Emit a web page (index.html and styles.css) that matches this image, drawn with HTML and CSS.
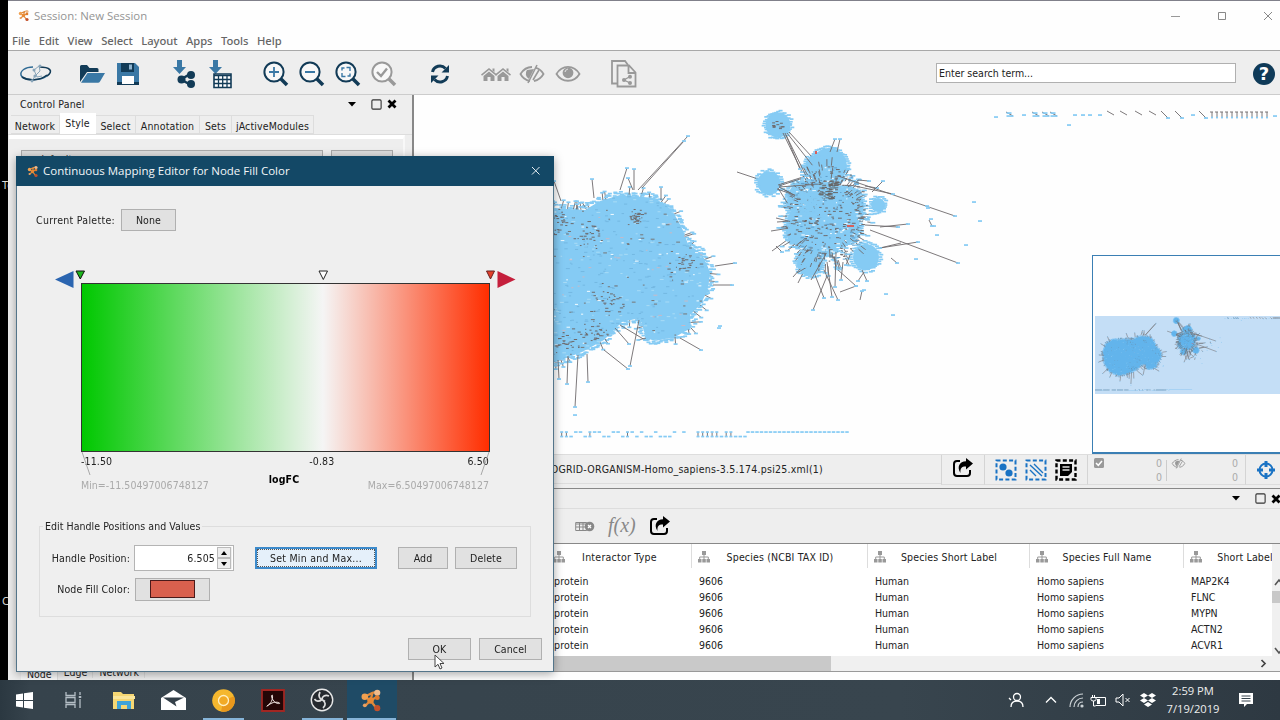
FILE: index.html
```html
<!DOCTYPE html>
<html lang="en">
<head>
    <meta charset="UTF-8">
    <title>Session: New Session</title>
    <link rel="stylesheet" href="styles.css">
</head>
<body>

<!-- shared icons -->
<svg class="defs" width="0" height="0">
    <symbol id="logo" viewBox="0 0 24 24">
        <path d="M5 8l8-4 5-1M13 4l-2 8 6 8M5 8l6 4 7-4M11 12l-6 6" fill="none" stroke="#e08a3c" stroke-width="2.4"/>
        <circle cx="5" cy="8" r="3.4" fill="#f0a050"/><circle cx="18" cy="4" r="3.2" fill="#efbb8b"/>
        <circle cx="11" cy="12" r="3.4" fill="#e98a35"/><circle cx="18" cy="9" r="2.6" fill="#e07b2c"/>
        <circle cx="18" cy="20" r="3.2" fill="#c4512b"/><circle cx="5" cy="17" r="2" fill="#e9a060"/>
    </symbol>
    <symbol id="lens" viewBox="0 0 26 26">
        <circle cx="11" cy="11" r="9.6" fill="#fff" fill-opacity=".6" stroke="currentColor" stroke-width="2"/>
        <path d="M18 18l6 6" stroke="currentColor" stroke-width="3.6"/>
    </symbol>
    <symbol id="share" viewBox="0 0 22 20">
        <path d="M8 3H5a3 3 0 0 0-3 3v9a3 3 0 0 0 3 3h10a3 3 0 0 0 3-3v-3" fill="none" stroke="#000" stroke-width="2"/>
        <path d="M14 0l7 5.500-7 6V8.500C10 8.300 8 10 8.500 15 4.500 9 7.500 3.500 14 3.300z" fill="#000"/>
    </symbol>
    <symbol id="tree" viewBox="0 0 12 12">
        <path d="M4 0h4v4H4zM0 8h3.500v3.500H0zM4.300 8h3.500v3.500H4.300zM8.500 8H12v3.500H8.500z" fill="#999"/>
        <path d="M6 4v4M1.700 8V6h8.600v2" fill="none" stroke="#999"/>
    </symbol>
    <symbol id="eye-off" viewBox="0 0 26 20">
        <path d="M11 17C6 16 3 13 1.500 10 4 6 8 3 13 3M17 3.800c4 1.200 6 3.500 7.500 6.200-2 3.500-5 6-9.500 7" fill="none" stroke="currentColor" stroke-width="1.8"/>
        <path d="M8 6l7-1-5 10a6 6 0 0 1-2-9z" fill="currentColor"/>
        <path d="M18 1L9 19M20 6l-6 10" stroke="currentColor" stroke-width="1.600"/>
    </symbol>
    <symbol id="float" viewBox="0 0 10 10"><rect x=".8" y=".8" width="8.400" height="8.400" rx="1" fill="none" stroke="#333"/></symbol>
    <symbol id="close" viewBox="0 0 10 10"><path d="M1.500 1.500l7 7M8.500 1.500l-7 7" stroke="#000" stroke-width="2.800"/></symbol>
</svg>

<div class="desktop">
    <div class="desktop-edge">
        <span class="edge-label">To</span>
        <span class="edge-label">Cy</span>
    </div>

    <div class="app">
        <div class="titlebar">
            <svg class="title-logo" width="12" height="13"><use href="#logo"/></svg>
            <span class="title-text">Session: New Session</span>
            <div class="window-buttons">
                <svg width="10" height="10"><path d="M0 5.500h9" stroke="#999"/></svg>
                <svg width="10" height="10"><path d="M1.500 1.500h7v7h-7z" fill="none" stroke="#888"/></svg>
                <svg width="10" height="10"><path d="M1 1l8 8M9 1L1 9" stroke="#888"/></svg>
            </div>
        </div>
        <div class="menubar">
            <span>File</span><span>Edit</span><span>View</span><span>Select</span><span>Layout</span><span>Apps</span><span>Tools</span><span>Help</span>
        </div>

        <div class="toolbar">
            <div class="tools">
                <div class="tool-group">
                    <span class="tool"><svg width="34" height="22" viewBox="0 0 34 22" fill="none">
                        <path d="M14 4C6 4 1 8 2 12c1 5 17 7 26 1" stroke="#2f6a94" stroke-width="1.500"/>
                        <path d="M28 13c7-5 3-9-8-9M3 14c6 4 18 4 25-2" stroke="#123b57" stroke-width="1.600"/>
                        <path d="M15 7l5-4 1 5-5 5-3 5M15 7l3 7 5-1" stroke="#8aa6ba"/>
                        <circle cx="15" cy="7" r="1.500" fill="#8aa6ba"/><circle cx="21" cy="3" r="1.500" fill="#8aa6ba"/><circle cx="16" cy="13" r="1.600" fill="#8aa6ba"/><circle cx="13" cy="18" r="1.400" fill="#8aa6ba"/>
                    </svg></span>
                </div>
                <div class="tool-group">
                    <span class="tool"><svg width="26" height="20" viewBox="0 0 26 20">
                        <path d="M1 18V2.500Q1 1 2.500 1H8l2.500 3H18q1.500 0 1.500 1.500V8H8z" fill="#123b57"/>
                        <path d="M8.500 9H26l-5 8.500q-.7 1.200-2 1.200H2z" fill="#3a78a5"/>
                    </svg></span>
                    <span class="tool"><svg width="24" height="24" viewBox="0 0 24 24">
                        <path d="M1 1h18l4 4v18H1z" fill="#3a78a5"/><path d="M5 1h13v9H5z" fill="#123b57"/>
                        <path d="M13 2.500h3v5h-3z" fill="#8fb4cf"/><path d="M1 20h22v3H1z" fill="#123b57"/><path d="M6 14h12v8H6z" fill="#fff"/>
                    </svg></span>
                </div>
                <div class="tool-group">
                    <span class="tool"><svg width="24" height="30" viewBox="0 0 24 30">
                        <path d="M5 1h5v7h4l-6.500 7L1 8h4z" fill="#3a78a5"/>
                        <path d="M18 15L9 20.500l9 5" stroke="#123b57" stroke-width="2.500" fill="none"/>
                        <circle cx="9.500" cy="20.500" r="4" fill="#123b57"/><circle cx="19" cy="16" r="4" fill="#123b57"/><circle cx="19" cy="25" r="4" fill="#123b57"/>
                    </svg></span>
                    <span class="tool"><svg width="24" height="30" viewBox="0 0 24 30">
                        <path d="M5 1h5v7h4l-6.500 7L1 8h4z" fill="#3a78a5"/>
                        <path d="M6 15h17v13.500H6z" fill="#fff" stroke="#123b57" stroke-width="1.600"/>
                        <path d="M6 16.500h17M6 20.500h17M6 24.500h17M10.500 16v12M14.700 16v12M19 16v12" stroke="#123b57" stroke-width="1.300"/>
                    </svg></span>
                </div>
                <div class="tool-group">
                    <span class="tool"><svg class="navy" width="26" height="26" viewBox="0 0 26 26"><use href="#lens"/><path d="M11 6v10M6 11h10" stroke="#3a78a5" stroke-width="1.800"/></svg></span>
                    <span class="tool"><svg class="navy" width="26" height="26" viewBox="0 0 26 26"><use href="#lens"/><path d="M6 11h10" stroke="#3a78a5" stroke-width="2"/></svg></span>
                    <span class="tool"><svg class="navy" width="26" height="26" viewBox="0 0 26 26"><use href="#lens"/><path d="M11.500 6.500H15V10M10.500 15.500H7V12M7 9.500V7h2.500M15 12.500V15h-2.500" fill="none" stroke="#3a78a5" stroke-width="1.400"/></svg></span>
                    <span class="tool"><svg class="grey" width="26" height="26" viewBox="0 0 26 26"><use href="#lens"/><path d="M6 11l4 4 6-7.500" fill="none" stroke="#999" stroke-width="2.400"/></svg></span>
                </div>
                <div class="tool-group">
                    <span class="tool"><svg width="20" height="20" viewBox="0 0 20 20">
                        <path d="M2.500 8a7.600 7.600 0 0 1 13-3.500M17.500 12a7.600 7.600 0 0 1-13 3.500" fill="none" stroke="#123b57" stroke-width="3"/>
                        <path d="M19 1v7.500h-7.500zM1 19v-7.500h7.500z" fill="#123b57"/>
                    </svg></span>
                </div>
                <div class="tool-group">
                    <span class="tool"><svg width="32" height="16" viewBox="0 0 32 16" fill="#999">
                        <path d="M1 8.500L9 2l8 6.500-1 1.200-7-5.700-7 5.700zM3.500 10L9 5.500l5.500 4.500v5h-4v-4h-3v4h-4zM12.500 2.500h2V6l-2-1.600z"/>
                        <path d="M15 8.500L23 2l8 6.500-1 1.200-7-5.700-7 5.700zM17.500 10L23 5.500l5.500 4.500v5h-4v-4h-3v4h-4zM26.500 2.500h2V6l-2-1.600z"/>
                    </svg></span>
                    <span class="tool"><svg class="grey" width="26" height="20"><use href="#eye-off"/></svg></span>
                    <span class="tool"><svg width="26" height="20" viewBox="0 0 26 20">
                        <path d="M1.500 10C7 .5 19 .5 24.500 10 19 19 7 19 1.500 10z" fill="none" stroke="#999" stroke-width="1.800"/>
                        <circle cx="13" cy="8.800" r="5.400" fill="#999"/><path d="M10 8q.5-2.500 3-3" fill="none" stroke="#ddd" stroke-width="1.200"/>
                    </svg></span>
                </div>
                <div class="tool-group">
                    <span class="tool"><svg width="26" height="30" viewBox="0 0 26 30" fill="none" stroke="#999" stroke-width="1.800">
                        <path d="M6 24.500H1V2h13l3 4"/><path d="M6.500 6.500h11.500l6.500 7v14h-18zM17.500 7v7h7"/>
                        <path d="M19 17.500l-6 3.500 6 3" stroke-width="1.300"/>
                        <g fill="#999" stroke="none"><circle cx="13" cy="21" r="2"/><circle cx="19" cy="17.800" r="2"/><circle cx="19" cy="24" r="2"/></g>
                    </svg></span>
                </div>
            </div>
            <div class="search">Enter search term...</div>
            <div class="help">?</div>
        </div>

        <div class="workspace">
            <div class="control-panel">
                <div class="panel-head">
                    <span>Control Panel</span>
                    <svg class="caret" width="8" height="5"><path d="M0 0h8L4 4.500z"/></svg>
                    <svg class="float" width="11" height="11"><use href="#float"/></svg>
                    <svg width="10" height="10"><use href="#close"/></svg>
                </div>
                <div class="tabs">
                    <span class="tab tab-network">Network</span><span class="tab tab-style active">Style</span><span class="tab tab-select">Select</span><span class="tab tab-annotation">Annotation</span><span class="tab tab-sets">Sets</span><span class="tab tab-modules">jActiveModules</span>
                </div>
                <div class="style-pane">
                    <div class="style-combo">default</div>
                    <div class="style-options"></div>
                </div>
                <div class="bottom-tabs">
                    <span class="active">Node</span><span>Edge</span><span>Network</span>
                </div>
            </div>

            <div class="main-view">
                <div class="network-view">
                    <canvas id="network" width="866" height="359"></canvas>
                    <div class="birds-eye"><canvas id="overview" width="187" height="78"></canvas></div>
                </div>
                <div class="network-status">
                    <span class="network-name">BIOGRID-ORGANISM-Homo_sapiens-3.5.174.psi25.xml(1)</span>
                    <div class="status-cell export"><svg width="22" height="20"><use href="#share"/></svg></div>
                    <div class="status-cell selectors">
                        <svg width="22" height="22" viewBox="0 0 22 22"><rect x="1.500" y="1.500" width="19" height="19" fill="none" stroke="#1a73c4" stroke-width="2" stroke-dasharray="4 2.300"/><circle cx="8" cy="8" r="3.600" fill="#1a73c4"/><circle cx="14" cy="14" r="3.600" fill="#1a73c4"/></svg>
                        <svg width="22" height="22" viewBox="0 0 22 22"><rect x="1.500" y="1.500" width="19" height="19" fill="none" stroke="#1a73c4" stroke-width="2" stroke-dasharray="4 2.300"/><path d="M5 11l6 6M5 6l12 11M9 5l9 9" stroke="#1a73c4" stroke-width="1.400"/></svg>
                        <svg width="22" height="22" viewBox="0 0 22 22"><rect x="1.500" y="1.500" width="19" height="19" fill="none" stroke="#000" stroke-width="2.400" stroke-dasharray="4 2.300"/><path d="M5 5h12v8l-4 4H5z"/><path d="M7.500 8h7M7.500 11h7" stroke="#ddd" stroke-width="1.300"/></svg>
                    </div>
                    <div class="status-cell counts">
                        <svg width="10" height="10" viewBox="0 0 10 10"><rect width="10" height="10" rx="1.500" fill="#999"/><path d="M2 5l2.300 2.300L8 3" fill="none" stroke="#fff" stroke-width="1.500"/></svg>
                        <span class="count count-selected">0<br>0</span>
                        <span class="count-line"></span>
                        <svg class="grey" width="15" height="11" viewBox="0 0 26 20"><use href="#eye-off"/></svg>
                        <span class="count count-hidden">0<br>0</span>
                    </div>
                    <div class="status-cell target"><svg width="20" height="20" viewBox="0 0 20 20" fill="none" stroke="#1a73c4"><circle cx="10" cy="10" r="6.500" stroke-width="2"/><path d="M10 1v6M10 13v6M1 10h6M13 10h6" stroke-width="3"/></svg></div>
                </div>

                <div class="table-head">
                    <svg class="caret" width="8" height="5"><path d="M0 0h8L4 4.500z"/></svg>
                    <svg class="float" width="11" height="11"><use href="#float"/></svg>
                    <svg width="10" height="10"><use href="#close"/></svg>
                </div>
                <div class="table-tools">
                    <svg width="20" height="11" viewBox="0 0 20 11"><path d="M.7 1.500h11v8H.7zM1 3h11M1 6h10M4.500 2v7M8 2v7" fill="none" stroke="#888"/><circle cx="14.500" cy="5.500" r="4.800" fill="#888"/><path d="M13 4l3 3M16 4l-3 3" stroke="#fff" stroke-width="1.300"/></svg>
                    <span class="fx">f(x)</span>
                    <svg width="22" height="20"><use href="#share"/></svg>
                </div>

                <div class="table-area">
                    <div class="table-scroll">
                        <table>
                            <colgroup><col class="col-type"><col class="col-tax"><col class="col-short"><col class="col-full"><col class="col-label"></colgroup>
                            <thead>
                                <tr>
                                    <th><div><svg width="12" height="12"><use href="#tree"/></svg><span>Interactor Type</span></div></th>
                                    <th><div><svg width="12" height="12"><use href="#tree"/></svg><span>Species (NCBI TAX ID)</span></div></th>
                                    <th><div><svg width="12" height="12"><use href="#tree"/></svg><span>Species Short Label</span></div></th>
                                    <th><div><svg width="12" height="12"><use href="#tree"/></svg><span>Species Full Name</span></div></th>
                                    <th><div><svg width="12" height="12"><use href="#tree"/></svg><span>Short Label</span></div></th>
                                </tr>
                            </thead>
                            <tbody>
                                <tr><td>protein</td><td>9606</td><td>Human</td><td>Homo sapiens</td><td>MAP2K4</td></tr>
                                <tr><td>protein</td><td>9606</td><td>Human</td><td>Homo sapiens</td><td>FLNC</td></tr>
                                <tr><td>protein</td><td>9606</td><td>Human</td><td>Homo sapiens</td><td>MYPN</td></tr>
                                <tr><td>protein</td><td>9606</td><td>Human</td><td>Homo sapiens</td><td>ACTN2</td></tr>
                                <tr><td>protein</td><td>9606</td><td>Human</td><td>Homo sapiens</td><td>ACVR1</td></tr>
                            </tbody>
                        </table>
                    </div>
                    <div class="v-scroll">
                        <svg width="8" height="9"><path d="M3 7l4-5 4 5" fill="none" stroke="#555" stroke-width="1.600"/></svg>
                        <span class="v-thumb"></span>
                        <svg class="down" width="8" height="9"><path d="M3 2l4 5 4-5" fill="none" stroke="#555" stroke-width="1.600"/></svg>
                    </div>
                </div>
                <div class="h-scroll">
                    <span class="h-thumb"></span>
                    <svg width="7" height="9"><path d="M1.500 1l3.500 3.500L1.500 8" fill="none" stroke="#444" stroke-width="1.700"/></svg>
                </div>
            </div>
        </div>
    </div>

    <div class="taskbar">
        <span class="task"><svg width="17" height="17" viewBox="0 0 17 17" fill="#fff"><path d="M0 2.500L7 1.400V8H0zM8 1.200L17 0v8H8zM0 9h7v6.600L0 14.600zM8 9h9v8l-9-1.200z"/></svg></span>
        <span class="task"><svg width="18" height="16" viewBox="0 0 18 16" fill="none" stroke="#b4bec5" stroke-width="1.300"><path d="M1 0v3.500h9V0M1 5.500h9v5H1zM1 16v-3.500h9V16M15 0v3M15 7v9"/><path d="M15 4v2" stroke-width="2.500"/></svg></span>
        <span class="task"><svg width="22" height="19" viewBox="0 0 22 19"><path d="M0 1h8l2 2h11v15H0z" fill="#f6d773"/><path d="M0 5h22v3H0z" fill="#fbe69b"/><path d="M4 18v-8h14v8h-4v-4H8v4z" fill="#3fa3d8"/></svg></span>
        <span class="task"><svg width="25" height="20" viewBox="0 0 25 20"><path d="M0 8L12.500 0 25 8v12H0z" fill="#fff"/><path d="M2 7.500h21L14 12l1.500 4.500z" fill="#333f48"/></svg></span>
        <span class="task running"><svg width="23" height="23" viewBox="0 0 23 23"><circle cx="11.500" cy="11.500" r="11.300" fill="#f5b72e"/><path d="M11.500 11.500L22 7.300A11.300 11.300 0 0 1 9 22.500z" fill="#e9981c"/><circle cx="11.500" cy="11.500" r="5" fill="#f2aa26" stroke="#fff0c4" stroke-width="1.300"/></svg></span>
        <span class="task"><svg width="24" height="23" viewBox="0 0 24 23"><path d="M1 1h22v21H1z" fill="#240606" stroke="#a12622" stroke-width="1.800"/><path d="M6 17c4-2 6-7 5.500-10.500-.5-1.500-1.500 0-.3 3 1.800 4 5 5.500 7.300 5 1-1-3.500-2-7.500-.5C7.500 15.500 5 18 6 17z" fill="none" stroke="#f4e8e4"/></svg></span>
        <span class="task running"><svg width="24" height="24" viewBox="0 0 24 24"><circle cx="12" cy="12" r="10.700" fill="#25292e" stroke="#e8e8e8" stroke-width="1.400"/><path d="M10 4c-2 4-.5 7 2 7.500M19 8c-4-1.500-7 .5-7 3.500M13 20c3-2.500 3-6-1-8.500M12 11.500c-3 2.500-6 2-7.500-.5M12 11.500l3 2" fill="none" stroke="#ddd" stroke-width="1.700"/></svg></span>
        <span class="task running current"><svg width="23" height="23"><use href="#logo"/></svg></span>

        <div class="tray">
            <svg class="t-person" width="16" height="16" viewBox="0 0 16 16" fill="none" stroke="#fff" stroke-width="1.300"><circle cx="9" cy="5" r="3.500"/><path d="M3 15c0-4 2.500-6 6-6s6 2 6 6M1 6l2 2"/></svg>
            <svg class="t-up" width="12" height="8"><path d="M1 6.500l5-5 5 5" fill="none" stroke="#fff" stroke-width="1.300"/></svg>
            <svg class="t-wifi" width="15" height="15" viewBox="0 0 15 15" fill="none" stroke="#ccd2d6" stroke-width="1.200"><path d="M1 14C1 7 7 1 14 1M5 14c0-5 4-9 9-9M9 14c0-3 2-5 5-5"/><circle cx="13" cy="13" r="1" fill="#fff"/></svg>
            <svg class="t-battery" width="17" height="13" viewBox="0 0 17 13" fill="none" stroke="#fff"><path d="M5.500 3.500h10v8h-10M2.500 1v2M4.500 1v2M1 3.500h5v2Q6 7 3.500 7T1 5.500zM3.500 7v5h2"/><path d="M7 5h3v5H7z" fill="#fff" stroke="none"/></svg>
            <svg class="t-volume" width="16" height="14" viewBox="0 0 16 14" fill="none" stroke="#fff"><path d="M1 5h3l4-4v12L4 9H1zM10.500 5l4 4M14.500 5l-4 4"/></svg>
            <svg class="t-box" width="16" height="14" viewBox="0 0 16 14" fill="#fff"><path d="M4 0l4 2.500L4 5 0 2.500zM12 0l4 2.500L12 5 8 2.500zM4 5l4 2.500L4 10 0 7.500zM12 5l4 2.500-4 2.500-4-2.500zM8 9l4 2.500L8 14l-4-2.500z"/></svg>
            <div class="clock">2:59 PM<br>7/19/2019</div>
            <svg class="t-note" width="16" height="16" viewBox="0 0 16 16"><path d="M1 1h14v11H9l-3 3v-3H1z" fill="#fff"/><path d="M3.500 4h9M3.500 6.500h9M3.500 9h9" stroke="#36434c"/></svg>
        </div>
    </div>

    <div class="dialog">
        <div class="dialog-title">
            <svg width="12" height="13"><use href="#logo"/></svg>
            <span>Continuous Mapping Editor for Node Fill Color</span>
            <svg class="dialog-close" width="10" height="10"><path d="M1 1l7.500 7.500M8.500 1L1 8.500" stroke="#e6eef2"/></svg>
        </div>
        <div class="dialog-body">
            <div class="palette-row">
                <span class="palette-label">Current Palette:</span>
                <button class="btn btn-none">None</button>
            </div>

            <div class="mapping">
                <svg class="handles" width="470" height="20" viewBox="51 265 470 20">
                    <path d="M73.500 271v17L55 279.500z" fill="#2b65b0"/>
                    <path d="M497.500 271v17l18-8.500z" fill="#c51f3c"/>
                    <path d="M76 271h8.500l-4.200 8z" fill="#1cb51c" stroke="#111"/>
                    <path d="M319 271h8.500l-4.200 8.500z" fill="#fff" stroke="#222"/>
                    <path d="M486.500 271h8l-4 8z" fill="#e2402a" stroke="#622"/>
                </svg>
                <div class="gradient"></div>
                <svg class="ticks" width="409" height="28"><path d="M1 0l8 23M408 0l-8 23" stroke="#a8a8a8"/></svg>
                <div class="scale"><span>-11.50</span><span class="mid">-0.83</span><span>6.50</span></div>
                <div class="axis-name">logFC</div>
                <div class="range"><span>Min=-11.50497006748127</span><span>Max=6.50497006748127</span></div>
            </div>

            <fieldset class="edit-box">
                <legend>Edit Handle Positions and Values</legend>
                <div class="edit-row">
                    <label>Handle Position:</label>
                    <div class="spinner">
                        <span class="spin-value">6.505</span>
                        <div class="spin-buttons">
                            <i><svg width="6" height="4"><path d="M0 4h6L3 0z"/></svg></i>
                            <i><svg width="6" height="4"><path d="M0 0h6L3 4z"/></svg></i>
                        </div>
                    </div>
                    <button class="btn btn-minmax">Set Min and Max...</button>
                    <button class="btn btn-add">Add</button>
                    <button class="btn btn-delete">Delete</button>
                </div>
                <div class="edit-row">
                    <label>Node Fill Color:</label>
                    <button class="btn btn-color"><span class="swatch"></span></button>
                </div>
            </fieldset>

            <div class="dialog-actions">
                <button class="btn">OK</button>
                <button class="btn">Cancel</button>
            </div>
        </div>
    </div>

    <svg class="cursor" width="12" height="17" viewBox="0 0 12 17"><path d="M1 1v12l3-2.700 2 4.700 2-1-2-4.500h4z" fill="#fff" stroke="#444"/></svg>
</div>

<script src="network.js"></script>
</body>
</html>
```

FILE: styles.css
```css
* { box-sizing: border-box; margin: 0; padding: 0 }
body {
    width: 1280px;
    height: 720px;
    overflow: hidden;
    background: #000;
    color: #222;
    font-family: "DejaVu Sans Condensed", "DejaVu Sans", sans-serif;
    font-size: 10.5px;
}
svg { display: block; flex: none }
.defs { position: absolute }

.desktop {
    position: relative;
    display: grid;
    grid-template-columns: 8px 1fr;
    grid-template-rows: 680px 40px;
    height: 720px;
    overflow: hidden;
}
.desktop-edge {
    overflow: hidden;
    padding-top: 177px;
    color: #ddd;
    font-family: "Noto Sans", sans-serif;
    font-size: 11px;
    line-height: 15px;
}
.edge-label {
    display: block;
    width: 16px;
    padding-left: 2px;
    margin-bottom: 401px;
}

/* main window */
.app {
    display: flex;
    flex-direction: column;
    min-width: 0;
    border-top: 1px solid #80808a;
    background: #fefefe;
    overflow: hidden;
}
.titlebar {
    display: flex;
    align-items: center;
    height: 30px;
    padding: 0 0 1px 10px;
    font-family: "Open Sans", sans-serif;
    font-size: 11.4px;
    color: #949494;
}
.title-logo { margin-right: 4px }
.window-buttons {
    display: flex;
    gap: 36px;
    margin-left: auto;
    padding-right: 7px;
}
.menubar {
    display: flex;
    gap: 8.5px;
    height: 20px;
    padding-left: 4px;
    border-bottom: 1px solid #a8a8a8;
    font-family: "Noto Sans", sans-serif;
    font-size: 11.2px;
    font-weight: 500;
    letter-spacing: -0.03px;
    line-height: 19px;
    color: #666;
}

.toolbar {
    display: flex;
    align-items: center;
    height: 44px;
    padding-left: 10px;
    background: #eee;
    border-bottom: 1px solid #ccc;
}
.tools { display: flex; gap: 20px; flex: 1; padding-top: 3px }
.tool-group { display: flex }
.tool {
    display: flex;
    align-items: center;
    justify-content: center;
    width: 36px;
    height: 36px;
}
.navy { color: #123b57 }
.grey { color: #999 }
.search {
    width: 300px;
    height: 20px;
    padding-left: 2px;
    background: #fff;
    border: 1px solid #b0b0b0;
    line-height: 18px;
}
.help {
    width: 22px;
    height: 22px;
    margin: 2px 5px 0 17px;
    border-radius: 50%;
    background: #0f3a58;
    color: #fff;
    font: bold 18px/22px "DejaVu Sans", sans-serif;
    text-align: center;
}

.workspace { display: flex; flex: 1; min-height: 0 }

/* control panel */
.control-panel {
    display: flex;
    flex-direction: column;
    width: 406px;
    background: #eee;
    border-right: 2px solid #888;
    letter-spacing: 0.15px;
}
.panel-head {
    display: flex;
    align-items: center;
    height: 18px;
    padding: 0 15px 0 12px;
}
.panel-head span { flex: 1 }
.caret { margin-right: 15px }
.float { margin-right: 5px }
.tabs {
    display: flex;
    align-items: flex-end;
    height: 22px;
    padding-left: 3px;
    border-bottom: 1px solid #ddd;
}
.tab {
    height: 19px;
    border: 1px solid #ddd;
    border-left: 0;
    line-height: 20px;
    text-align: center;
    white-space: nowrap;
}
.tab.active {
    height: 21px;
    background: #fff;
    border-color: #fff;
    line-height: 19px;
}
.tab-network { width: 49px }
.tab-style { width: 36px }
.tab-select { width: 40px }
.tab-annotation { width: 64px }
.tab-sets { width: 32px }
.tab-modules { width: 82px }
.style-pane {
    display: flex;
    gap: 8px;
    flex: 1;
    margin: 0 7px 0 1px;
    padding: 11px 10px 0 12px;
    border-top: 4px solid #fff;
    border-right: 2px solid #f8f8f8;
}
.style-combo, .style-options {
    height: 24px;
    background: #ddd;
    border: 1px solid #aaa;
}
.style-combo { flex: 1; padding: 2px 0 0 16px }
.style-options { width: 62px }
.bottom-tabs {
    display: flex;
    height: 17px;
    padding-left: 13px;
    overflow: hidden;
    letter-spacing: 0;
}
.bottom-tabs span {
    height: 15px;
    padding: 0 5px 0 6px;
    border-right: 1px solid #ddd;
    line-height: 19px;
}
.bottom-tabs .active { height: 17px; background: #f9f9f9; line-height: 23px }

/* network view */
.main-view {
    display: flex;
    flex-direction: column;
    flex: 1;
    min-width: 0;
}
.network-view {
    position: relative;
    height: 359px;
    background: #fefefe;
}
#network { display: block }
.birds-eye {
    position: absolute;
    right: 0;
    bottom: 0;
    width: 188px;
    height: 199px;
    padding: 60px 0 0 2px;
    background: #fff;
    border: 1px solid #3b7fb4;
    border-right: 0;
    border-bottom-width: 2px;
}
.birds-eye canvas { display: block; background: #c4def6 }

.network-status {
    display: flex;
    height: 35px;
    background: #eee;
    border-top: 1px solid #ddd;
    border-bottom: 1px solid #888;
}
.network-name {
    flex: 1;
    line-height: 29px;
    padding-left: 127px;
    border-bottom: 1px solid #ddd;
    margin-bottom: 4px;
    letter-spacing: 0.24px;
}
.status-cell {
    display: flex;
    align-items: center;
    height: 30px;
    border-left: 1px solid #d4d4d4;
    border-bottom: 1px solid #ddd;
}
.export { width: 43px; padding: 0 0 4px 10px }
.selectors { width: 103px; gap: 8px; padding-left: 10px }
.counts {
    width: 158px;
    align-items: flex-start;
    padding: 3px 7px 0 6px;
    color: #aaa;
    line-height: 13.5px;
}
.count { margin-top: -1px; text-align: right }
.count-selected { width: 58px }
.count-hidden { flex: 1 }
.count-line { width: 1px; height: 21px; margin: 2px 4px 0; background: #ccc }
.target { width: 35px; padding-left: 10px; overflow: hidden }

/* table panel */
.table-head {
    display: flex;
    justify-content: flex-end;
    align-items: center;
    height: 20px;
    background: #eee;
    border-bottom: 1px solid #ddd;
}
.table-head svg:last-child { margin-right: -1px }
.table-tools {
    display: flex;
    align-items: center;
    height: 35px;
    padding-left: 161px;
    background: #eee;
    border-bottom: 1px solid #888;
}
.fx {
    width: 31px;
    margin: -1px 10px 0 13px;
    font: italic 20px "Liberation Serif", serif;
    color: #888;
}
.table-area { display: flex; height: 112px; background: #fff }
.table-scroll { width: 858px; overflow: hidden }
table {
    width: 892px;
    table-layout: fixed;
    border-collapse: collapse;
}
.col-type { width: 278px }
.col-tax { width: 176px }
.col-short { width: 162px }
.col-full { width: 154px }
.col-label { width: 122px }
th {
    height: 29px;
    padding: 0;
    font-weight: normal;
    vertical-align: top;
}
th div {
    display: flex;
    align-items: center;
    height: 24px;
    padding: 2px 17px 0 6px;
    border-right: 1px solid #ddd;
    letter-spacing: 0.15px;
    white-space: nowrap;
}
th:first-child div { padding-left: 139px; letter-spacing: 0.25px }
th span { flex: 1; text-align: center }
td { height: 16px; padding: 0 0 0 7px; line-height: 16px }
td:first-child { padding-left: 140px; letter-spacing: 0.15px }
.v-scroll {
    width: 8px;
    background: #f0f0f0;
    padding-top: 34px;
    overflow: hidden;
}
.v-thumb { display: block; height: 12px; margin-top: 4px; background: #c8c8c8 }
.down { margin-top: 43px }
.h-scroll {
    display: flex;
    align-items: center;
    height: 16px;
    background: #f0f0f0;
    border-bottom: 1px solid #999;
}
.h-thumb { width: 417px; height: 15px; margin-right: 429px; background: #c9c9c9 }

/* dialog window */
.dialog {
    position: absolute;
    left: 16px;
    top: 156px;
    width: 538px;
    height: 516px;
    background: #efefef;
    border: 1px solid #54758a;
    border-top: 0;
    box-shadow: 0 2px 9px rgba(0, 0, 0, 0.35);
    letter-spacing: 0.12px;
}
.dialog-title {
    display: flex;
    align-items: center;
    height: 30px;
    margin: 0 -1px;
    padding: 0 13px 0 11px;
    background: #134866;
    color: #f2f6f8;
    font-family: "Open Sans", sans-serif;
    font-size: 11.5px;
    letter-spacing: 0;
}
.dialog-title span { flex: 1; margin: -1px 0 0 4px }
.palette-row {
    display: flex;
    align-items: center;
    padding: 23px 0 0 19px;
}
.palette-label { width: 85px; letter-spacing: 0.3px }
.btn {
    height: 22px;
    background: #e1e1e1;
    border: 1px solid #b0b0b0;
    color: #222;
    font: inherit;
    letter-spacing: inherit;
}
.btn-none { width: 55px }

.mapping {
    position: relative;
    margin-top: 34px;
    padding: 0 63px 0 64px;
}
.handles { margin-left: -30px; overflow: visible }
.gradient {
    height: 169px;
    margin-top: -2px;
    border: 1px solid #333;
    background: linear-gradient(to right, #00c800, #f5f5f5 59.2%, #ff2e00);
}
.ticks { position: absolute; left: 64px; top: 187px }
.scale, .range { display: flex; justify-content: space-between }
.scale { height: 20px; padding-right: 1px; line-height: 19px }
.mid { margin-left: 64px }
.axis-name {
    height: 13px;
    padding-right: 3px;
    font-weight: bold;
    line-height: 15px;
    text-align: center;
    color: #000;
}
.range { padding-right: 1px; color: #aaa; line-height: 0; letter-spacing: 0.03px }

.edit-box {
    width: 492px;
    height: 98px;
    margin: 34px 0 0 22px;
    padding: 12px 0 0 11px;
    border: 1px solid #ddd;
}
.edit-box legend {
    margin-left: -8px;
    padding: 0 2px;
    line-height: 14px;
    letter-spacing: 0.05px;
}
.edit-row {
    display: flex;
    align-items: center;
    height: 26px;
    margin-bottom: 5px;
}
.edit-row label { width: 79px; margin-right: 4px; text-align: right; white-space: nowrap }
.spinner {
    display: flex;
    width: 100px;
    height: 26px;
    padding: 1px;
    background: #fff;
    border: 1px solid #b4b4b4;
}
.spin-value { flex: 1; line-height: 23px; text-align: right; padding-right: 2px }
.spin-buttons { width: 15px; background: #eee }
.spin-buttons i {
    display: flex;
    align-items: center;
    justify-content: center;
    width: 14px;
    height: 11px;
    border: 1px solid #bbb;
}
.btn-minmax {
    width: 122px;
    margin: 0 21px;
    background: #e5f0fa;
    border: 2px solid #3c8acb;
    outline: 1px dotted #555;
    outline-offset: -3px;
    letter-spacing: 0.25px;
}
.btn-add { width: 50px; margin-right: 7px }
.btn-delete { width: 62px }
.btn-color { width: 75px; height: 23px; margin-left: 1px; padding: 0 }
.swatch {
    display: block;
    width: 45px;
    height: 18px;
    margin: 0 auto;
    background: #d9604e;
    border: 1px solid #4a1a1a;
}
.dialog-actions {
    display: flex;
    justify-content: flex-end;
    gap: 8px;
    padding: 21px 11px 0 0;
}
.dialog-actions .btn { width: 63px }

.cursor { position: absolute; left: 434px; top: 654px }

/* taskbar */
.taskbar {
    grid-column: 1 / 3;
    display: flex;
    background: linear-gradient(to right, #2b3841, #36434c 30px, #38454e 900px, #2e3942);
}
.task {
    display: flex;
    align-items: center;
    justify-content: center;
    width: 49.6px;
}
.running { background: linear-gradient(#86b4d8, #86b4d8) center bottom / 41px 2px no-repeat }
.current { background-color: #1f4b66; background-size: 49px 2px }
.tray {
    display: flex;
    align-items: center;
    margin-left: auto;
}
.t-up { margin: 0 12px 0 21px }
.t-battery { margin: 0 8px 0 6px }
.t-volume { margin-right: 9px }
.clock {
    width: 74px;
    font-family: "Open Sans", sans-serif;
    font-size: 11.2px;
    line-height: 18px;
    text-align: center;
    color: #eee;
}
.t-note { margin: 0 26px 0 8px }
```

FILE: network.js
```javascript
// Small seeded generator, so both canvases show the same graph
function rng(seed) {
    return () => {
        seed = (seed * 16807) % 2147483647;
        return seed / 2147483647;
    };
}

// Outline of the large component
const outline = [
    [450, 265], [464, 228], [495, 209], [554, 208], [585, 210], [600, 201], [620, 195], [655, 198],
    [672, 210], [682, 228], [688, 244], [702, 254], [710, 272], [708, 290], [700, 305], [690, 315],
    [691, 328], [675, 337], [655, 341], [646, 338], [640, 318], [622, 322], [604, 340], [582, 352],
    [556, 362], [520, 370], [480, 352], [458, 318], [452, 288]
];
// Hubs of the second component: x, y, radius
const hubs = [
    [778, 125, 13.500], [769, 183, 12.500], [829, 166, 19], [815, 166, 11], [806, 200, 20], [845, 206, 20], [810, 224, 24],
    [841, 226, 20], [820, 205, 25], [810, 263, 14], [866, 257, 14], [878, 205, 8], [800, 232, 15], [826, 236, 20]
];
const spokes = [
    [638, 190, 688, 136], [642, 188, 684, 141], [620, 190, 627, 168], [634, 190, 634, 169], [661, 200, 661, 187],
    [594, 198, 592, 179], [561, 201, 554, 181], [715, 266, 735, 263], [713, 285, 732, 285], [680, 338, 701, 350],
    [639, 320, 630, 366], [604, 350, 628, 369], [578, 355, 575, 407], [587, 354, 588, 382], [568, 356, 567, 384],
    [620, 325, 645, 340], [615, 328, 629, 344], [558, 360, 559, 379], [633, 190, 628, 178],
    [783, 133, 802, 172], [785, 133, 808, 180], [787, 133, 813, 166], [789, 132, 812, 157], [786, 135, 800, 169],
    [737, 172, 758, 179], [830, 152, 835, 139], [837, 152, 840, 139], [778, 185, 806, 176], [779, 186, 803, 178],
    [779, 187, 820, 184], [779, 187, 800, 198], [778, 188, 788, 204], [777, 189, 797, 196],
    [838, 176, 955, 216], [850, 185, 893, 194], [870, 230, 958, 263], [880, 248, 918, 242], [865, 225, 898, 227],
    [880, 227, 908, 224], [815, 275, 824, 298], [827, 276, 813, 310], [824, 270, 838, 300], [838, 270, 856, 286],
    [840, 292, 856, 286], [862, 270, 867, 281], [864, 272, 858, 281], [771, 231, 790, 228], [772, 251, 787, 240],
    [777, 222, 790, 221], [776, 218, 792, 222], [797, 273, 807, 267], [793, 277, 801, 268], [798, 283, 803, 273],
    [891, 258, 897, 263], [860, 300, 862, 291], [929, 220, 932, 226], [811, 280, 827, 252], [850, 255, 846, 265],
    [865, 186, 877, 188], [872, 192, 883, 181], [858, 180, 869, 181], [776, 246, 782, 252], [901, 243, 880, 248],
    [836, 252, 835, 287], [827, 262, 832, 297], [843, 262, 841, 280], [460, 240, 440, 228], [455, 300, 430, 310],
    [470, 340, 448, 362], [490, 355, 480, 378], [530, 368, 526, 395], [455, 280, 432, 278], [480, 220, 470, 196]
];
const strays = [
    [720, 326], [719, 328], [575, 415], [928, 208], [934, 226], [937, 235], [966, 245], [974, 202], [980, 221],
    [916, 259], [886, 294], [893, 315], [864, 290], [931, 219], [927, 206], [996, 117], [1069, 125]
];

function draw(ctx, blue, thick, specks) {
    const rand = rng(4242);
    const grey = "#6e6a6c";
    const node = (x, y, w = 4) => {
        ctx.fillStyle = blue;
        ctx.fillRect(x - w / 2, y - .8, w, 1.7);
    };
    const edge = (x1, y1, x2, y2) => {
        ctx.beginPath();
        ctx.moveTo(x1, y1);
        ctx.lineTo(x2, y2);
        ctx.stroke();
    };
    ctx.strokeStyle = grey;
    ctx.lineWidth = thick;

    const body = new Path2D();
    outline.forEach(p => body.lineTo(p[0], p[1]));
    body.closePath();
    ctx.fillStyle = blue;
    ctx.fill(body);

    // ragged leaves round the outline
    outline.forEach((p, i) => {
        const q = outline[(i + 1) % outline.length];
        const len = Math.hypot(q[0] - p[0], q[1] - p[1]);
        for (let d = 0; d < len; d += 1.5) {
            const x = p[0] + (q[0] - p[0]) * d / len;
            const y = p[1] + (q[1] - p[1]) * d / len;
            const nx = (q[1] - p[1]) / len, ny = -(q[0] - p[0]) / len;
            const far = rand() < .12 ? 5 + rand() * 4 : rand() * 4;
            const ex = x + nx * far + (rand() - .5) * 4, ey = y + ny * far;
            if (far > 4) edge(x, y, ex, ey);
            node(ex, ey);
        }
    });

    // specks inside the large component, denser where the lobes meet
    ctx.save();
    ctx.clip(body);
    for (let i = 0; i < 850 * specks; i++) {
        const x = 450 + rand() * 260, y = 196 + rand() * 168, r = rand();
        ctx.fillStyle = r < .5 ? "#74b8e2" : r < .7 ? "#a9dcf6" : r < .82 ? "#777" : r < .93 ? "#f2fbff" : "#c9b9c6";
        ctx.fillRect(x, y, 1.5 + rand() * 2.5, 1);
    }
    [[606, 300, 18], [592, 334, 18], [588, 235, 16], [636, 216, 9], [560, 222, 16], [570, 345, 20], [685, 265, 22]].forEach(c => {
        for (let i = 0; i < 34 * specks; i++) {
            ctx.fillStyle = grey;
            ctx.fillRect(c[0] + (rand() + rand() - 1) * c[2], c[1] + (rand() + rand() - 1) * c[2], 1 + rand() * 2.5, 1);
        }
    });
    ctx.restore();

    hubs.forEach(([hx, hy, r]) => {
        ctx.fillStyle = blue;
        ctx.beginPath();
        ctx.arc(hx, hy, r - 1, 0, 7);
        ctx.fill();
        for (let a = 0; a < 6.28; a += 2.2 / r) {
            const d = r + (rand() - .5) * 3;
            node(hx + Math.cos(a) * d, hy + Math.sin(a) * d);
        }
    });

    // short branches on the second component
    for (let i = 0; i < 130; i++) {
        const a = rand() * 6.28, r = 26 + rand() * 16;
        const x = 827 + Math.cos(a) * r * 1.05, y = 216 + Math.sin(a) * r * 1.2;
        const out = 3 + rand() * 7;
        const ex = x + Math.cos(a) * out, ey = y + Math.sin(a) * out;
        edge(x, y, ex, ey);
        node(ex, ey, 5);
    }
    spokes.forEach(s => {
        edge(...s);
        node(s[2], s[3]);
    });
    for (let i = 0; i < 360 * specks; i++) {
        const a = rand() * 6.28, r = Math.sqrt(rand());
        ctx.fillStyle = rand() < .62 ? grey : rand() < .5 ? "#fff" : "#5f9fcb";
        ctx.fillRect(829 + Math.cos(a) * r * 38, 214 + Math.sin(a) * r * 48, 1 + rand() * 3, 1);
    }
    for (let i = 0; i < 90 * specks; i++) {
        ctx.fillStyle = blue;
        ctx.fillRect(798 + rand() * 22, 190 + rand() * 26, 4, 2);
    }
    for (let i = 0; i < 50 * specks; i++) {
        ctx.fillStyle = "#666";
        ctx.fillRect(818 + rand() * 18, 180 + rand() * 19, 2 + rand() * 3, 1);
    }
    for (let i = 0; i < 12; i++) {
        ctx.fillStyle = grey;
        ctx.fillRect(772 + rand() * 10, 121 + rand() * 8, 3, 1);
    }
    ctx.fillStyle = "#d8605c";
    ctx.fillRect(847, 225, 7, 2);
    ctx.fillRect(815, 151, 2, 3);
    strays.forEach(p => node(p[0], p[1]));

    // row of small components under the large one
    for (let x = 416; x < 746; x += 4.7) {
        const r = rand();
        const dense = x < 566 || (x > 685 && x < 735);
        if (r < (dense ? .8 : .25)) {
            edge(x, 432, x, 436);
            node(x, 432, 3);
            node(x, 436.5, 3);
        } else if (r < .9) {
            node(x, r < .5 ? 432 : 436.5, 3.5);
        }
    }
    for (let x = 748; x < 851; x += 4.5) node(x, 432, 3.5);

    // row at the top right
    [1010, 1036, 1046, 1054].forEach(x => {
        edge(x - 4, 112, x + 3, 116);
        node(x - 1, 113, 5);
        node(x, 116, 7);
    });
    [1024, 1075, 1083, 1090, 1100].forEach(x => node(x, 115));
    [1110, 1123, 1138, 1152, 1164, 1178, 1202].forEach((x, i) => {
        edge(x - 3, 111, x + 4, 115 + (i > 3 ? 3 : 0));
        if (i > 3) node(x + 4, 118);
    });
    node(1193, 115);
    for (let x = 1212; x < 1272; x += 5) {
        edge(x, 112, x, 117);
        edge(x - 2, 112, x + 1, 112);
        node(x, 117.5, 2);
    }
    node(1275, 116);
}

const main = document.getElementById("network").getContext("2d");
main.translate(-414, -95);
draw(main, "#85cbf4", .9, 1);

const mini = document.getElementById("overview").getContext("2d");
mini.translate(1002.4 - 1095, 292.5 - 316);
mini.scale(.2235, .2246);
draw(mini, "#62b4ec", 2.4, .3);
```
